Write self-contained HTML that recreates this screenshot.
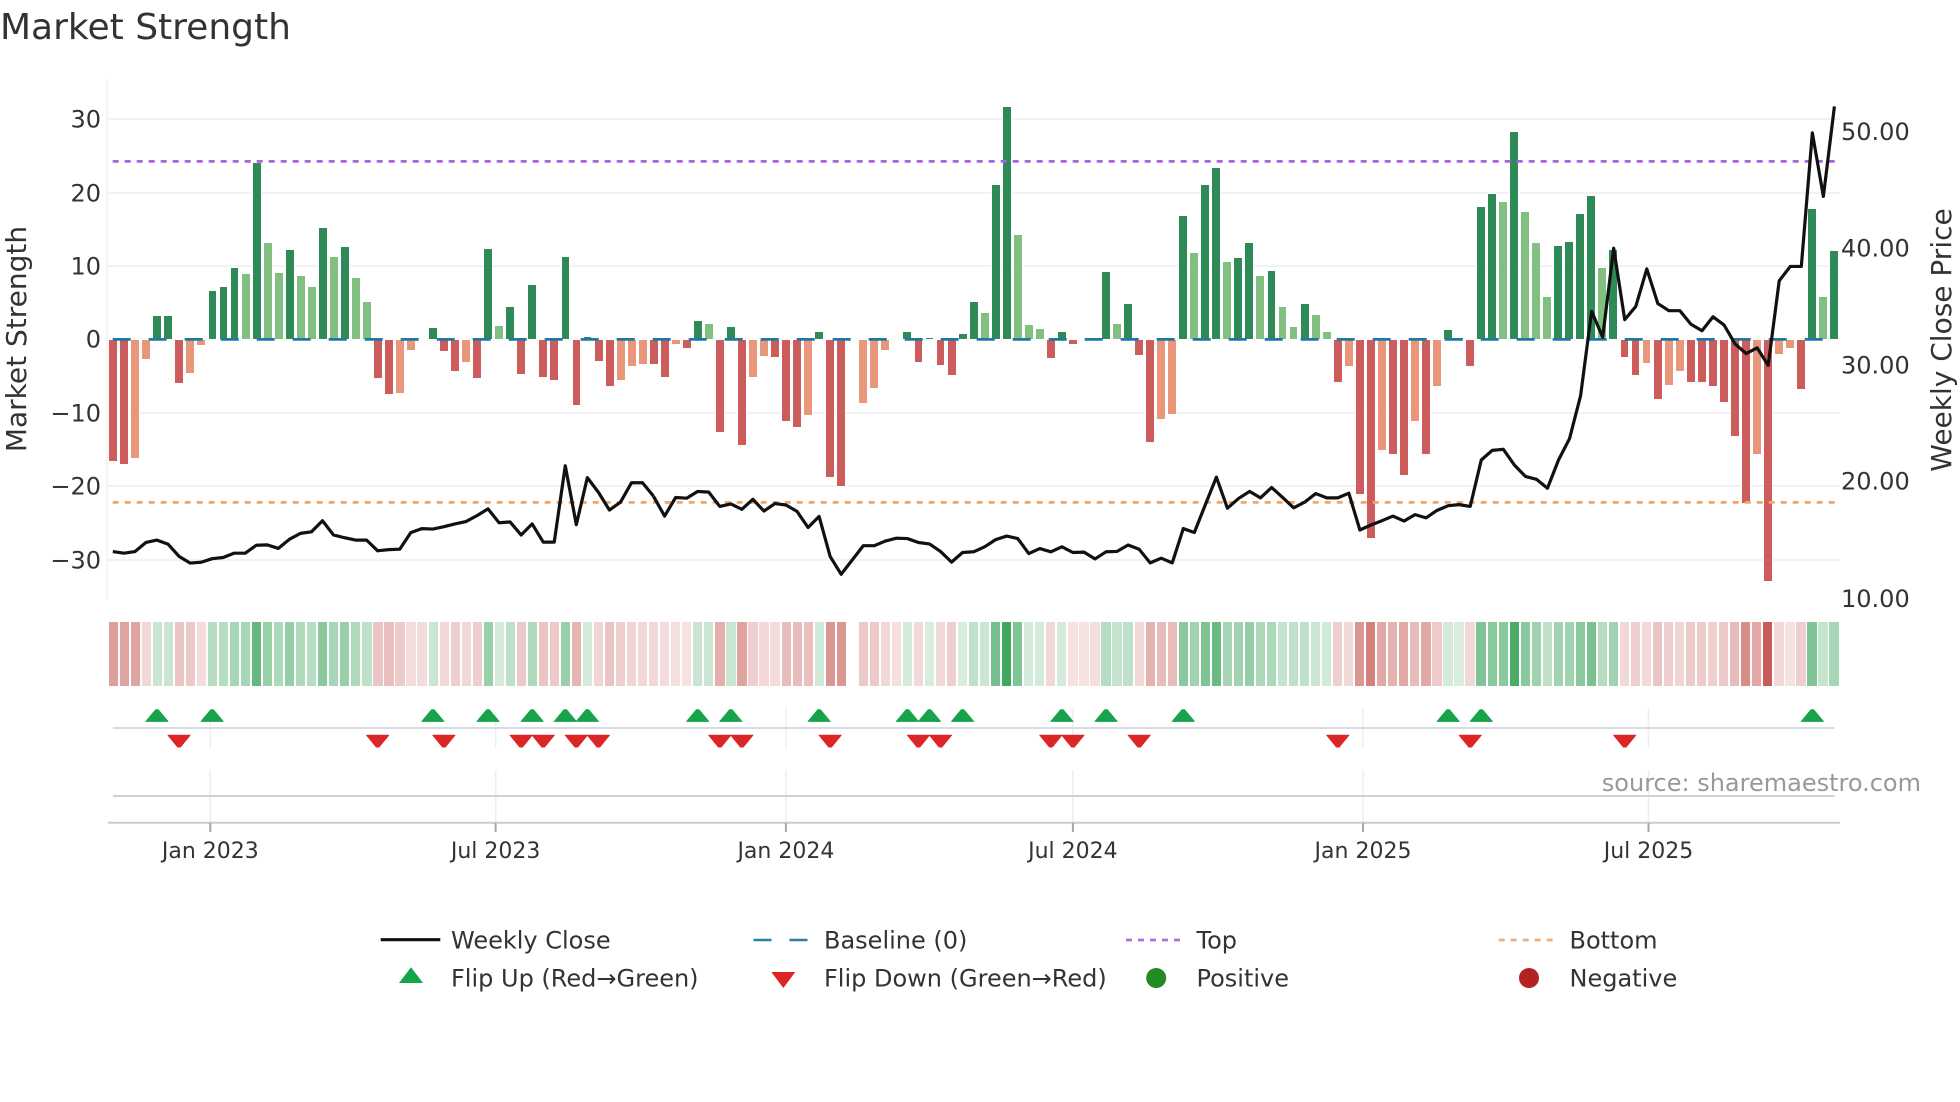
<!DOCTYPE html>
<html><head><meta charset="utf-8"><title>Market Strength</title>
<style>
html,body{margin:0;padding:0;background:#fff}
#w{position:relative;width:1960px;height:1102px;overflow:hidden;background:#fff;font-family:"DejaVu Sans","Liberation Sans",sans-serif}
svg{position:absolute;left:0;top:0}
#b{position:absolute;left:107.7px;top:339px;display:flex;height:0}
#b i{flex:0 0 11.04px;position:relative;height:0;display:block}
#b i::before{content:"";position:absolute;left:1.55px;width:7.9px;box-shadow:0 0 0 1px #fff}
#b .d::before,#b .l::before{bottom:0;height:calc(var(--v)*7.35px)}
#b .r::before,#b .o::before{top:1px;height:calc(var(--v)*7.35px)}
#b .d::before{background:#2e8b57}
#b .l::before{background:#81c081}
#b .r::before{background:#cd5c5c}
#b .o::before{background:#e9967a}
#h{position:absolute;left:107.7px;top:622px;height:64px;display:flex}
#h u{flex:0 0 9.2px;margin:0 .93px;height:64px;display:block;text-decoration:none}
#h .r{background:rgb(188,63,56)}
#h .g{background:rgb(42,157,78)}
text{font-family:"DejaVu Sans","Liberation Sans",sans-serif;fill:#333}
</style></head><body><div id="w">

<svg width="1960" height="1102" viewBox="0 0 1960 1102">
<g stroke="#f0f1f5" stroke-width="1.7">
<line x1="108" x2="1840" y1="119" y2="119"/>
<line x1="108" x2="1840" y1="193" y2="193"/>
<line x1="108" x2="1840" y1="266" y2="266"/>
<line x1="108" x2="1840" y1="339.5" y2="339.5"/>
<line x1="108" x2="1840" y1="413" y2="413"/>
<line x1="108" x2="1840" y1="486" y2="486"/>
<line x1="108" x2="1840" y1="560" y2="560"/>
</g>
<line x1="107.3" x2="107.3" y1="79" y2="599" stroke="#f2f3f5" stroke-width="2"/>
<g stroke="#eceef2" stroke-width="1.6">
<path d="M210.3 712V748M210.3 770V822M495.6 712V748M495.6 770V822M785.9 708V748M785.9 770V822M1072.9 708V748M1072.9 770V822M1363 708V748M1363 770V822M1648.5 708V748M1648.5 770V822" fill="none"/>
</g>
<line x1="113" x2="1834.5" y1="728" y2="728" stroke="#d8dbe2" stroke-width="2"/>
<line x1="113" x2="1834.5" y1="796" y2="796" stroke="#d0d1d4" stroke-width="2"/>
<line x1="108" x2="1840" y1="822.7" y2="822.7" stroke="#cbccd0" stroke-width="2"/>
<path d="M210.3 823V832M495.6 823V832M785.9 823V832M1072.9 823V832M1363 823V832M1648.5 823V832" stroke="#a5a7ab" stroke-width="2" fill="none"/>
</svg>

<div id="b"><i class=r style=--v:16.5></i><i class=r style=--v:16.9></i><i class=o style=--v:16></i><i class=o style=--v:2.6></i><i class=d style=--v:3.1></i><i class=d style=--v:3.1></i><i class=r style=--v:5.8></i><i class=o style=--v:4.5></i><i class=o style=--v:.65></i><i class=d style=--v:6.5></i><i class=d style=--v:7.1></i><i class=d style=--v:9.7></i><i class=l style=--v:8.9></i><i class=d style=--v:24></i><i class=l style=--v:13></i><i class=l style=--v:9></i><i class=d style=--v:12.1></i><i class=l style=--v:8.6></i><i class=l style=--v:7.1></i><i class=d style=--v:15.1></i><i class=l style=--v:11.2></i><i class=d style=--v:12.5></i><i class=l style=--v:8.3></i><i class=l style=--v:5.1></i><i class=r style=--v:5.2></i><i class=r style=--v:7.3></i><i class=o style=--v:7.2></i><i class=o style=--v:1.4></i><i></i><i class=d style=--v:1.5></i><i class=r style=--v:1.5></i><i class=r style=--v:4.2></i><i class=o style=--v:3></i><i class=r style=--v:5.2></i><i class=d style=--v:12.3></i><i class=l style=--v:1.8></i><i class=d style=--v:4.3></i><i class=r style=--v:4.6></i><i class=d style=--v:7.3></i><i class=r style=--v:5.1></i><i class=r style=--v:5.4></i><i class=d style=--v:11.2></i><i class=r style=--v:8.8></i><i class=d style=--v:.3></i><i class=r style=--v:2.9></i><i class=r style=--v:6.3></i><i class=o style=--v:5.4></i><i class=o style=--v:3.5></i><i class=o style=--v:3.2></i><i class=r style=--v:3.3></i><i class=r style=--v:5.1></i><i class=o style=--v:.6></i><i class=r style=--v:1.1></i><i class=d style=--v:2.5></i><i class=l style=--v:2></i><i class=r style=--v:12.5></i><i class=d style=--v:1.6></i><i class=r style=--v:14.3></i><i class=o style=--v:5></i><i class=o style=--v:2.2></i><i class=r style=--v:2.3></i><i class=r style=--v:11></i><i class=r style=--v:11.8></i><i class=o style=--v:10.2></i><i class=d style=--v:1></i><i class=r style=--v:18.7></i><i class=r style=--v:19.8></i><i></i><i class=o style=--v:8.6></i><i class=o style=--v:6.5></i><i class=o style=--v:1.4></i><i></i><i class=d style=--v:.9></i><i class=r style=--v:3></i><i class=d style=--v:.2></i><i class=r style=--v:3.4></i><i class=r style=--v:4.7></i><i class=d style=--v:.7></i><i class=d style=--v:5.1></i><i class=l style=--v:3.5></i><i class=d style=--v:21></i><i class=d style=--v:31.5></i><i class=l style=--v:14.2></i><i class=l style=--v:1.9></i><i class=l style=--v:1.4></i><i class=r style=--v:2.4></i><i class=d style=--v:.9></i><i class=r style=--v:.5></i><i></i><i></i><i class=d style=--v:9.1></i><i class=l style=--v:2.1></i><i class=d style=--v:4.8></i><i class=r style=--v:2.1></i><i class=r style=--v:13.9></i><i class=o style=--v:10.8></i><i class=o style=--v:10.1></i><i class=d style=--v:16.7></i><i class=l style=--v:11.7></i><i class=d style=--v:21></i><i class=d style=--v:23.3></i><i class=l style=--v:10.5></i><i class=d style=--v:11></i><i class=d style=--v:13></i><i class=l style=--v:8.6></i><i class=d style=--v:9.3></i><i class=l style=--v:4.3></i><i class=l style=--v:1.6></i><i class=d style=--v:4.8></i><i class=l style=--v:3.3></i><i class=l style=--v:.9></i><i class=r style=--v:5.7></i><i class=o style=--v:3.5></i><i class=r style=--v:21></i><i class=r style=--v:27></i><i class=o style=--v:15></i><i class=r style=--v:15.5></i><i class=r style=--v:18.4></i><i class=o style=--v:11></i><i class=r style=--v:15.5></i><i class=o style=--v:6.2></i><i class=d style=--v:1.2></i><i class=d style=--v:.2></i><i class=r style=--v:3.6></i><i class=d style=--v:18></i><i class=d style=--v:19.7></i><i class=l style=--v:18.6></i><i class=d style=--v:28.2></i><i class=l style=--v:17.3></i><i class=l style=--v:13.1></i><i class=l style=--v:5.7></i><i class=d style=--v:12.6></i><i class=d style=--v:13.2></i><i class=d style=--v:17></i><i class=d style=--v:19.4></i><i class=l style=--v:9.6></i><i class=d style=--v:12.1></i><i class=r style=--v:2.3></i><i class=r style=--v:4.8></i><i class=o style=--v:3.1></i><i class=r style=--v:8></i><i class=o style=--v:6.1></i><i class=o style=--v:4.2></i><i class=r style=--v:5.7></i><i class=r style=--v:5.7></i><i class=r style=--v:6.3></i><i class=r style=--v:8.4></i><i class=r style=--v:13></i><i class=r style=--v:22.2></i><i class=o style=--v:15.5></i><i class=r style=--v:32.8></i><i class=o style=--v:1.9></i><i class=o style=--v:1.1></i><i class=r style=--v:6.7></i><i class=d style=--v:17.7></i><i class=l style=--v:5.7></i><i class=d style=--v:12></i></div>

<div id="h"><u class=r style=opacity:.5></u><u class=r style=opacity:.48></u><u class=r style=opacity:.48></u><u class=r style=opacity:.2></u><u class=g style=opacity:.25></u><u class=g style=opacity:.25></u><u class=r style=opacity:.3></u><u class=r style=opacity:.28></u><u class=r style=opacity:.18></u><u class=g style=opacity:.35></u><u class=g style=opacity:.35></u><u class=g style=opacity:.42></u><u class=g style=opacity:.42></u><u class=g style=opacity:.72></u><u class=g style=opacity:.48></u><u class=g style=opacity:.38></u><u class=g style=opacity:.5></u><u class=g style=opacity:.38></u><u class=g style=opacity:.35></u><u class=g style=opacity:.55></u><u class=g style=opacity:.42></u><u class=g style=opacity:.48></u><u class=g style=opacity:.38></u><u class=g style=opacity:.3></u><u class=r style=opacity:.3></u><u class=r style=opacity:.33></u><u class=r style=opacity:.28></u><u class=r style=opacity:.18></u><u class=r style=opacity:.18></u><u class=g style=opacity:.25></u><u class=r style=opacity:.2></u><u class=r style=opacity:.25></u><u class=r style=opacity:.2></u><u class=r style=opacity:.25></u><u class=g style=opacity:.48></u><u class=g style=opacity:.2></u><u class=g style=opacity:.3></u><u class=r style=opacity:.28></u><u class=g style=opacity:.38></u><u class=r style=opacity:.3></u><u class=r style=opacity:.28></u><u class=g style=opacity:.48></u><u class=r style=opacity:.38></u><u class=g style=opacity:.2></u><u class=r style=opacity:.22></u><u class=r style=opacity:.3></u><u class=r style=opacity:.25></u><u class=r style=opacity:.22></u><u class=r style=opacity:.2></u><u class=r style=opacity:.2></u><u class=r style=opacity:.18></u><u class=r style=opacity:.17></u><u class=r style=opacity:.15></u><u class=g style=opacity:.25></u><u class=g style=opacity:.25></u><u class=r style=opacity:.42></u><u class=g style=opacity:.25></u><u class=r style=opacity:.48></u><u class=r style=opacity:.25></u><u class=r style=opacity:.2></u><u class=r style=opacity:.18></u><u class=r style=opacity:.35></u><u class=r style=opacity:.35></u><u class=r style=opacity:.33></u><u class=g style=opacity:.22></u><u class=r style=opacity:.55></u><u class=r style=opacity:.55></u><u style=opacity:0></u><u class=r style=opacity:.28></u><u class=r style=opacity:.28></u><u class=r style=opacity:.2></u><u class=r style=opacity:.17></u><u class=g style=opacity:.2></u><u class=r style=opacity:.2></u><u class=g style=opacity:.18></u><u class=r style=opacity:.2></u><u class=r style=opacity:.25></u><u class=g style=opacity:.18></u><u class=g style=opacity:.3></u><u class=g style=opacity:.25></u><u class=g style=opacity:.65></u><u class=g style=opacity:.9></u><u class=g style=opacity:.6></u><u class=g style=opacity:.2></u><u class=g style=opacity:.2></u><u class=r style=opacity:.2></u><u class=g style=opacity:.2></u><u class=r style=opacity:.15></u><u class=r style=opacity:.15></u><u class=r style=opacity:.17></u><u class=g style=opacity:.35></u><u class=g style=opacity:.28></u><u class=g style=opacity:.3></u><u class=r style=opacity:.2></u><u class=r style=opacity:.4></u><u class=r style=opacity:.35></u><u class=r style=opacity:.35></u><u class=g style=opacity:.55></u><u class=g style=opacity:.45></u><u class=g style=opacity:.6></u><u class=g style=opacity:.7></u><u class=g style=opacity:.42></u><u class=g style=opacity:.45></u><u class=g style=opacity:.5></u><u class=g style=opacity:.4></u><u class=g style=opacity:.4></u><u class=g style=opacity:.28></u><u class=g style=opacity:.3></u><u class=g style=opacity:.3></u><u class=g style=opacity:.25></u><u class=g style=opacity:.22></u><u class=r style=opacity:.25></u><u class=r style=opacity:.2></u><u class=r style=opacity:.55></u><u class=r style=opacity:.65></u><u class=r style=opacity:.45></u><u class=r style=opacity:.4></u><u class=r style=opacity:.45></u><u class=r style=opacity:.35></u><u class=r style=opacity:.45></u><u class=r style=opacity:.27></u><u class=g style=opacity:.2></u><u class=g style=opacity:.18></u><u class=r style=opacity:.2></u><u class=g style=opacity:.6></u><u class=g style=opacity:.55></u><u class=g style=opacity:.55></u><u class=g style=opacity:.85></u><u class=g style=opacity:.55></u><u class=g style=opacity:.45></u><u class=g style=opacity:.3></u><u class=g style=opacity:.45></u><u class=g style=opacity:.45></u><u class=g style=opacity:.55></u><u class=g style=opacity:.62></u><u class=g style=opacity:.35></u><u class=g style=opacity:.45></u><u class=r style=opacity:.2></u><u class=r style=opacity:.25></u><u class=r style=opacity:.2></u><u class=r style=opacity:.3></u><u class=r style=opacity:.25></u><u class=r style=opacity:.22></u><u class=r style=opacity:.27></u><u class=r style=opacity:.27></u><u class=r style=opacity:.25></u><u class=r style=opacity:.28></u><u class=r style=opacity:.35></u><u class=r style=opacity:.6></u><u class=r style=opacity:.45></u><u class=r style=opacity:.85></u><u class=r style=opacity:.2></u><u class=r style=opacity:.15></u><u class=r style=opacity:.25></u><u class=g style=opacity:.6></u><u class=g style=opacity:.28></u><u class=g style=opacity:.42></u></div>

<svg width="1960" height="1102" viewBox="0 0 1960 1102">
<defs>
<polygon id="tu" points="-1,721.4 -.12,709.8 .12,709.8 1,721.4" fill="#16a34a" stroke="#16a34a" stroke-width="1" stroke-linejoin="round" vector-effect="non-scaling-stroke"/>
<polygon id="td" points="-1,735.2 1,735.2 .12,747 -.12,747" fill="#dc2626" stroke="#dc2626" stroke-width="1" stroke-linejoin="round" vector-effect="non-scaling-stroke"/>
</defs>
<line x1="112.7" x2="1835" y1="339.4" y2="339.4" stroke="#1f78a4" stroke-width="2.8" stroke-dasharray="18 18"/>
<line x1="112.7" x2="1835" y1="161.4" y2="161.4" stroke="#a565e0" stroke-width="2.8" stroke-dasharray="6 6"/>
<line x1="112.7" x2="1835" y1="502.4" y2="502.4" stroke="#f2a766" stroke-width="2.8" stroke-dasharray="6 6"/>
<g fill="none" stroke="#111" stroke-width="3.2" stroke-linejoin="round" stroke-linecap="butt">
<polyline vector-effect="non-scaling-stroke" transform="translate(112.8 0) scale(11.036 .3954)" points="0,1395 1,1399 2,1395 3,1372 4,1366 5,1376 6,1407 7,1424 8,1422 9,1413 10,1410 11,1399 12,1399 13,1379 14,1378 15,1387 16,1364 17,1349 18,1345 19,1317 20,1353 21,1360 22,1366 23,1366 24,1393 25,1390 26,1389 27,1347 28,1337 29,1338 30,1332 31,1325 32,1319 33,1304 34,1287 35,1322 36,1320 37,1353 38,1325 39,1371 40,1371 41,1178 42,1327 43,1208 44,1245 45,1290 46,1270 47,1221 48,1221 49,1255"/>
<polyline vector-effect="non-scaling-stroke" transform="translate(112.8 60) scale(11.036 .35714)" points="49,1222 50,1277 51,1225 52,1227 53,1208 54,1210 55,1250 56,1243 57,1258 58,1230 59,1263 60,1242 61,1246 62,1264 63,1309 64,1278 65,1390 66,1440 67,1400 68,1360 69,1360 70,1347 71,1339 72,1340 73,1351 74,1355 75,1376 76,1406 77,1379 78,1377 79,1363 80,1343 81,1333 82,1340 83,1382 84,1368 85,1377 86,1363 87,1379 88,1378 89,1397 90,1377 91,1376 92,1358 93,1370 94,1408 95,1395 96,1408 97,1312 98,1323 99,1245 100,1168 101,1255 102,1228 103,1208 104,1226 105,1197 106,1225 107,1254 108,1238 109,1214 110,1226 111,1226 112,1213 113,1316 114,1302 115,1290 116,1277 117,1291 118,1273 119,1282 120,1261 121,1248 122,1245 123,1250 124,1120 125,1093 126,1090 127,1134 128,1166 129,1174 130,1199 131,1120 132,1060 133,940 134,704 135,776 136,527 137,727 138,690 139,585 140,682 141,702 142,702 143,740 144,758 145,719 146,742 147,795 148,822 149,806 150,855 151,618 152,578 153,578 154,204 155,382 156,130"/>
</g>
<g transform="translate(112.8 0) scale(11.036 1)">
<use href="#tu" x="4"/><use href="#tu" x="9"/><use href="#tu" x="29"/><use href="#tu" x="34"/><use href="#tu" x="38"/><use href="#tu" x="41"/><use href="#tu" x="43"/><use href="#tu" x="53"/><use href="#tu" x="56"/><use href="#tu" x="64"/><use href="#tu" x="72"/><use href="#tu" x="74"/><use href="#tu" x="77"/><use href="#tu" x="86"/><use href="#tu" x="90"/><use href="#tu" x="97"/><use href="#tu" x="121"/><use href="#tu" x="124"/><use href="#tu" x="154"/>
<use href="#td" x="6"/><use href="#td" x="24"/><use href="#td" x="30"/><use href="#td" x="37"/><use href="#td" x="39"/><use href="#td" x="42"/><use href="#td" x="44"/><use href="#td" x="55"/><use href="#td" x="57"/><use href="#td" x="65"/><use href="#td" x="73"/><use href="#td" x="75"/><use href="#td" x="85"/><use href="#td" x="87"/><use href="#td" x="93"/><use href="#td" x="111"/><use href="#td" x="123"/><use href="#td" x="137"/>
</g>

<text x="0" y="39" font-size="36">Market Strength</text>
<g font-size="24" text-anchor="end">
<text x="101" y="127.5">30</text>
<text x="101" y="201.5">20</text>
<text x="101" y="274.5">10</text>
<text x="101" y="347.5">0</text>
<text x="101" y="421.5">−10</text>
<text x="101" y="494.5">−20</text>
<text x="101" y="568.5">−30</text>
</g>
<g font-size="24">
<text x="1841" y="140">50.00</text>
<text x="1841" y="256.5">40.00</text>
<text x="1841" y="373.5">30.00</text>
<text x="1841" y="489.5">20.00</text>
<text x="1841" y="607">10.00</text>
</g>
<text transform="translate(26 339) rotate(-90)" font-size="28" text-anchor="middle">Market Strength</text>
<text transform="translate(1951 340) rotate(-90)" font-size="28" text-anchor="middle">Weekly Close Price</text>
<g font-size="22" text-anchor="middle">
<text x="210.3" y="858">Jan 2023</text>
<text x="495.6" y="858">Jul 2023</text>
<text x="785.9" y="858">Jan 2024</text>
<text x="1072.9" y="858">Jul 2024</text>
<text x="1363" y="858">Jan 2025</text>
<text x="1648.5" y="858">Jul 2025</text>
</g>
<text x="1921" y="791" font-size="24" text-anchor="end" style="fill:#999">source: sharemaestro.com</text>

<line x1="380.7" x2="440.3" y1="939.7" y2="939.7" stroke="#111" stroke-width="3.2"/>
<line x1="753.5" x2="807.7" y1="940" y2="940" stroke="#2a7fa8" stroke-width="2.6" stroke-dasharray="18 18"/>
<line x1="1126" x2="1181" y1="940" y2="940" stroke="#ab74e6" stroke-width="2.8" stroke-dasharray="6 6"/>
<line x1="1498.7" x2="1553.8" y1="940" y2="940" stroke="#f2ad78" stroke-width="2.8" stroke-dasharray="6 6"/>
<polygon points="411,967.3 423,983 399,983" fill="#16a34a"/>
<polygon points="771.3,972 795.3,972 783.3,988" fill="#dc2626"/>
<circle cx="1156.2" cy="978" r="10" fill="#228b22"/>
<circle cx="1529" cy="978" r="10" fill="#b22222"/>
<g font-size="24">
<text x="451" y="948.5">Weekly Close</text>
<text x="824" y="948.5">Baseline (0)</text>
<text x="1196.5" y="948.5">Top</text>
<text x="1569.5" y="948.5">Bottom</text>
<text x="451" y="986.5">Flip Up (Red→Green)</text>
<text x="824" y="986.5">Flip Down (Green→Red)</text>
<text x="1196.5" y="986.5">Positive</text>
<text x="1569.5" y="986.5">Negative</text>
</g>
</svg>
</div></body></html>
